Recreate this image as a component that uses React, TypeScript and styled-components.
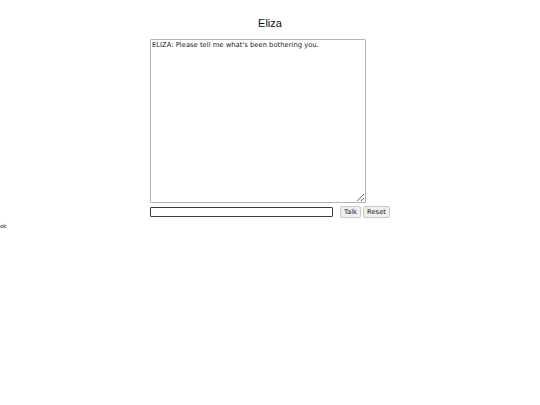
import React from "react";
import styled, { createGlobalStyle } from "styled-components";

const Global = createGlobalStyle`
  html, body { margin: 0; padding: 0; background: #fff; }
  body { font-family: "Liberation Sans", Arial, sans-serif; color: #000; }
`;

const Page = styled.div`
  display: flex;
  flex-direction: column;
  align-items: center;
`;

const Title = styled.h1`
  margin: 17px 0 0;
  font-size: 11px;
  line-height: 13px;
  font-weight: normal;
  color: #111;
`;

const Chat = styled.div`
  width: 240px;
  margin-top: 9px;
  display: flex;
  flex-direction: column;
  align-items: flex-start;
`;

const Log = styled.textarea`
  box-sizing: border-box;
  width: 216px;
  height: 164px;
  margin: 0;
  padding: 1px 1px;
  border: 1px solid #b4b4b4;
  border-radius: 1px;
  font-family: "DejaVu Sans", Verdana, sans-serif;
  font-size: 6.8px;
  line-height: 8px;
  color: #222;
  background: #fff;
  outline: none;
`;

const Row = styled.form`
  display: flex;
  align-items: center;
  margin-top: 3px;
  gap: 2px;
`;

const Input = styled.input`
  box-sizing: border-box;
  width: 183px;
  height: 10px;
  margin: 0 5px 0 0;
  padding: 0;
  border: 1px solid #3c3c3c;
  border-radius: 1px;
  background: #fff;
  outline: none;
`;

const Button = styled.button<{ $w: number }>`
  box-sizing: border-box;
  width: ${(p) => p.$w}px;
  height: 12px;
  padding: 0;
  margin: 0;
  border: 1px solid #c8c8c8;
  border-radius: 2px;
  background: #efefef;
  font-family: "DejaVu Sans", Verdana, sans-serif;
  font-size: 6.8px;
  line-height: 10px;
  color: #222;
`;

const Status = styled.div`
  align-self: flex-start;
  margin-top: 5px;
  font-family: "DejaVu Sans", Verdana, sans-serif;
  font-size: 5.5px;
  line-height: 7px;
  color: #222;
`;

export default function App() {
  return (
    <>
      <Global />
      <Page>
        <Title>Eliza</Title>
        <Chat>
          <Log readOnly defaultValue={"ELIZA: Please tell me what's been bothering you."} />
          <Row onSubmit={(e) => e.preventDefault()}>
            <Input type="text" />
            <Button type="submit" $w={21}>Talk</Button>
            <Button type="button" $w={27}>Reset</Button>
          </Row>
        </Chat>
        <Status>ok</Status>
      </Page>
    </>
  );
}
